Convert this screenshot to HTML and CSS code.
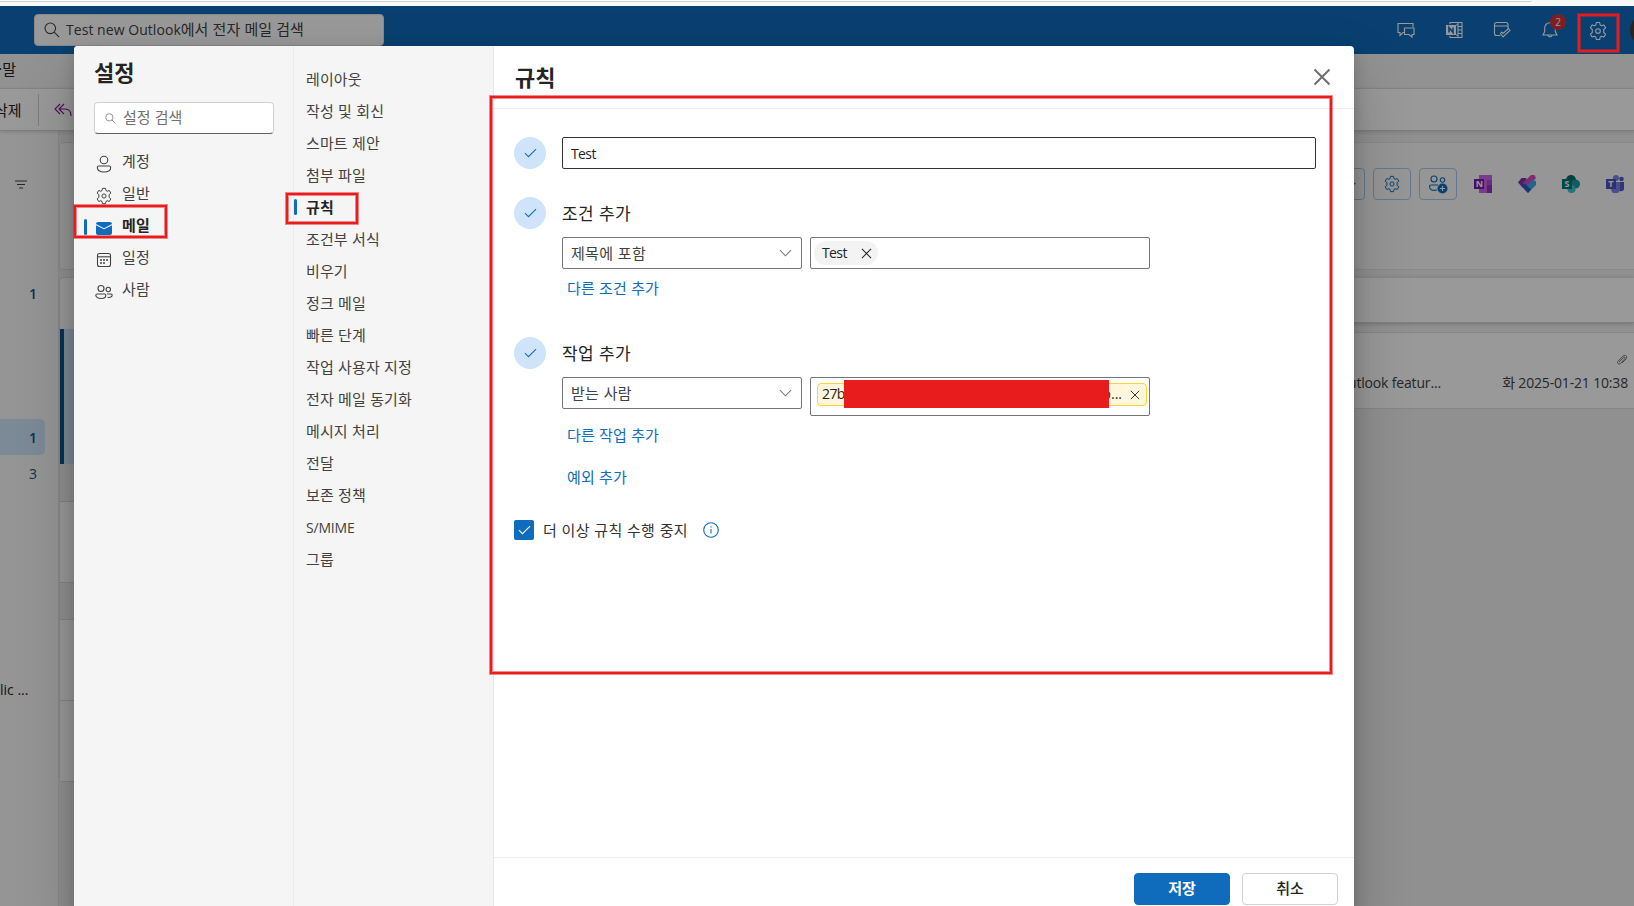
FILE: index.html
```html
<!DOCTYPE html>
<html lang="ko">
<head>
<meta charset="utf-8">
<title>설정 - 규칙</title>
<link rel="stylesheet" href="styles.css">
</head>
<body>
<svg class="defs" width="0" height="0">
  <symbol id="gear" viewBox="0 0 20 20"><path stroke-linejoin="round" d="M8.300 1.500h3.400l.5 2.500 1.300.75 2.400-.85 1.700 2.950-1.900 1.650v3l1.900 1.650-1.700 2.950-2.400-.85-1.300.75-.5 2.500H8.300l-.5-2.500-1.300-.75-2.400.85-1.700-2.950 1.900-1.650v-3L2.400 6.850 4.100 3.900l2.400.85L7.800 4z"/><circle cx="10" cy="10" r="2.300"/></symbol>
  <symbol id="check" viewBox="0 0 14 10"><path d="M1 5.200 4.800 9 13 .8"/></symbol>
  <symbol id="search" viewBox="0 0 16 16"><circle cx="6.300" cy="6.300" r="5.300"/><path d="m10.200 10.200 5 5"/></symbol>
  <symbol id="down" viewBox="0 0 14 8"><path d="m1 1 6 6 6-6"/></symbol>
  <symbol id="x" viewBox="0 0 12 12"><path d="m1 1 10 10M11 1 1 11"/></symbol>
</svg>

<div class="screen">
  <div class="chrome"><div class="address"></div></div>
  <div class="app">
    <header class="top">
      <div class="search"><svg class="ic" width="16" height="16"><use href="#search"/></svg><span><span class="en">Test new Outlook</span>에서 전자 메일 검색</span></div>
      <div class="topicons">
        <span><svg class="ic" width="20" height="20" viewBox="0 0 20 20"><path d="M8 12.500H7L4 15.500v-3H2V3.500h15V7"/><path d="M8.500 8h9.500v6.500h-2V17l-3-2.500H8.500z"/></svg></span>
        <span><svg class="ic" width="20" height="20" viewBox="0 0 20 20"><path d="M6 4V2.500h12v15H6V16M14 2.500v15M14 6.500h4M14 10h4M14 13.500h4M12 5h2M12 15h2"/><path class="fill" d="M2 5h10v10H2z"/><path class="cut" d="M5 12.500v-5l4 5v-5"/></svg></span>
        <span><svg class="ic" width="20" height="20" viewBox="0 0 20 20"><path d="M8.500 15.500H4.500a2 2 0 0 1-2-2v-9a2 2 0 0 1 2-2h9.500a2 2 0 0 1 2 2v4M2.500 6H16M8.500 13.500l2.500 3.500 7-6.500-1.500-2-5.500 5-1.300-1.500z"/></svg></span>
        <span class="bell"><svg class="ic" width="20" height="20" viewBox="0 0 20 20"><path d="M3 15h14l-1.700-3.500V8a5.300 5.300 0 0 0-10.600 0v3.500zM7.800 15.200a2.300 2.300 0 0 0 4.400 0"/></svg><b>2</b></span>
        <span><svg class="ic cog" width="20" height="20"><use href="#gear"/></svg></span>
      </div>
      <div class="avatar"></div>
    </header>
    <div class="tabs"><span>·말</span></div>
    <div class="toolbar"><span class="del">삭제</span><i></i><svg class="reply" width="18" height="14" viewBox="0 0 18 14"><path d="M6 1 1 6l5 5M10 1 5 6l5 5M5.500 6h5.500c4 0 6 3 6 7"/></svg></div>
    <div class="workspace">
      <nav class="folders">
        <svg class="filter" width="12" height="9" viewBox="0 0 12 9"><path d="M0 1h12M2 4.500h8M4 8h4"/></svg>
        <b class="n1">1</b><b class="pill">1</b><b class="n3">3</b><span class="pub">lic ...</span>
      </nav>
      <section class="list">
        <div class="card c1"></div>
        <div class="card c2"><div class="head"></div><div class="selected"></div><div class="gap wide"></div><div class="row"></div><div class="gap"></div><div class="row"></div><div class="row"></div></div>
      </section>
      <section class="reading">
        <div class="actions">
          <div class="btn part"><svg width="8" height="5" viewBox="0 0 14 8"><path stroke-width="2" d="m1 1 6 6 6-6"/></svg></div>
          <div class="btn"><svg class="blue" width="18" height="18"><use href="#gear"/></svg></div>
          <div class="btn"><svg class="blue" width="20" height="20" viewBox="0 0 20 20"><circle cx="6" cy="5" r="3"/><circle cx="14.500" cy="6" r="2.200"/><path d="M9 16c-4 1-7.500 0-7.500-3.500 0-1 .7-1.500 1.500-1.500h7M13 11h4"/><circle class="dot" cx="14.500" cy="14.500" r="4.500"/><path class="plus" d="M14.500 12v5M12 14.500h5"/></svg></div>
          <svg class="app1" width="18" height="18" viewBox="0 0 18 18"><path fill="#ca64ea" d="M5 0h13v18H5z"/><path fill="#ae4bd5" d="M13 5h5v5h-5z"/><path fill="#9332bf" d="M13 10h5v8h-5z"/><path fill="#7719aa" d="M0 4h10v10H0z"/><text x="1.800" y="12">N</text></svg>
          <svg class="app2" width="18" height="18" viewBox="0 0 18 18"><path fill="#7537ad" d="M0 7.500 3.500 3H8l2 4-5 6z"/><path fill="#d44ac1" d="M5 8 13 0h3.500L18 3l-8 9-5-1z"/><path fill="#3fa8e8" d="m14 5 4 1v4l-8 8-4.500-4.500z"/><path fill="#305abf" d="m3 10.500 4-2 6 6-3 3.500z"/></svg>
          <svg class="app3" width="18" height="18" viewBox="0 0 18 18"><circle cx="9" cy="5" r="5" fill="#036c70"/><circle cx="13.500" cy="9" r="4.500" fill="#1a9ba1"/><circle cx="9.500" cy="14" r="4" fill="#37c6d0"/><path fill="#03787c" d="M0 4h10v10H0z"/><text x="2.500" y="12">S</text></svg>
          <svg class="app4" width="18" height="18" viewBox="0 0 18 18"><circle cx="10" cy="3" r="3" fill="#7b83eb"/><circle cx="15.500" cy="4" r="2.300" fill="#5059c9"/><path fill="#5059c9" d="M12 7h6v5a3 3 0 0 1-6 2z"/><path fill="#7b83eb" d="M5 7h9v7a4.500 4.500 0 0 1-9 0z"/><path fill="#4b53bc" d="M0 4h10v10H0z"/><text x="2.300" y="12">T</text></svg>
        </div>
        <div class="subject"></div>
        <div class="message">
          <svg class="clip" width="12" height="12" viewBox="0 0 12 12"><path d="m3 8 4.500-4.500c1-1 2.300.2 1.300 1.300L4.500 9.500C2.800 11 .5 8.800 2 7.200L7 2c2.200-2 5 .7 3 3L6 9"/></svg>
          <p><span class="utl">utlook featur...</span><span class="date">화 2025-01-21 10:38</span></p>
        </div>
      </section>
    </div>
    <div class="scrim"></div>
  </div>

  <div class="dialog">
    <aside class="side">
      <h1>설정</h1>
      <div class="find"><svg width="11" height="11"><use href="#search"/></svg><span>설정 검색</span></div>
      <ul>
        <li><svg width="18" height="18" viewBox="0 0 18 18"><circle cx="9" cy="5" r="3.800"/><path d="M3.800 11h10.400c1 0 1.500.5 1.500 1.500 0 2.500-2.500 4.500-6.700 4.500s-6.700-2-6.700-4.500c0-1 .5-1.500 1.500-1.500z"/></svg>계정</li>
        <li><svg width="18" height="18"><use href="#gear"/></svg>일반</li>
        <li class="on"><i></i><svg width="18" height="18" viewBox="0 0 18 18"><path class="mail" d="M1 6.200 9 10.300 17 6.200V14a2 2 0 0 1-2 2H3a2 2 0 0 1-2-2zM1 5a2 2 0 0 1 2-2h12a2 2 0 0 1 2 2L9 9.200z"/></svg>메일</li>
        <li><svg width="18" height="18" viewBox="0 0 18 18"><rect x="2.500" y="2.500" width="13" height="13" rx="2"/><path d="M2.500 5.800h13"/><path class="dots" d="M5 9h2M8 9h2M11 9h2M5 12h2M8 12h2"/></svg>일정</li>
        <li><svg width="18" height="18" viewBox="0 0 18 18"><circle cx="6" cy="5.500" r="3"/><circle cx="13.300" cy="6.500" r="2.200"/><path d="M2.300 11h7.400c.7 0 1.100.5 1.100 1.200 0 2-2 3.300-4.800 3.300s-5.200-1.300-5.200-3.300c0-.7.700-1.200 1.500-1.200zM12 11h4c.8 0 1.200.4 1.200 1.100 0 1.800-2 2.700-4.700 2.200"/></svg>사람</li>
      </ul>
    </aside>
    <aside class="sub">
      <ul>
        <li>레이아웃</li><li>작성 및 회신</li><li>스마트 제안</li><li>첨부 파일</li><li class="on"><i></i>규칙</li><li>조건부 서식</li><li>비우기</li><li>정크 메일</li><li>빠른 단계</li><li>작업 사용자 지정</li><li>전자 메일 동기화</li><li>메시지 처리</li><li>전달</li><li>보존 정책</li><li class="en">S/MIME</li><li>그룹</li>
      </ul>
    </aside>
    <main class="pane">
      <div class="title"><h2>규칙</h2><svg width="18" height="18"><use href="#x"/></svg></div>
      <div class="form">
        <div class="step first"><span class="ok"><svg width="13" height="10"><use href="#check"/></svg></span><div class="name en">Test</div></div>
        <div class="step cond"><span class="ok"><svg width="13" height="10"><use href="#check"/></svg></span>
          <div class="body"><h3>조건 추가</h3>
            <div class="fields"><div class="select">제목에 포함<svg width="13" height="8"><use href="#down"/></svg></div><div class="box"><span class="tag en">Test<svg width="11" height="11"><use href="#x"/></svg></span></div></div>
            <a class="more">다른 조건 추가</a></div></div>
        <div class="step act"><span class="ok"><svg width="13" height="10"><use href="#check"/></svg></span>
          <div class="body"><h3>작업 추가</h3>
            <div class="fields"><div class="select">받는 사람<svg width="13" height="8"><use href="#down"/></svg></div><div class="box tall"><span class="person en"><span class="pre">27b</span><span class="mask"></span><span class="post">o...</span><svg width="10" height="10"><use href="#x"/></svg></span></div></div>
            <a class="more">다른 작업 추가</a><a class="more except">예외 추가</a></div></div>
        <div class="stop"><span class="cb"><svg width="13" height="10"><use href="#check"/></svg></span><span class="lbl">더 이상 규칙 수행 중지</span><svg class="info" width="16" height="16" viewBox="0 0 16 16"><circle cx="8" cy="8" r="7.300"/><path d="M8 7v4.500M8 4.300v1.200"/></svg></div>
      </div>
      <footer><button class="save">저장</button><button>취소</button></footer>
    </main>
  </div>

  <div class="mark m1"></div><div class="mark m2"></div><div class="mark m3"></div><div class="mark m4"></div>
</div>
</body>
</html>
```
FILE: styles.css
```css
* { box-sizing: border-box; }
body, h1, h2, h3, ul, p { margin: 0; padding: 0; }
ul { list-style: none; }
body { overflow: hidden; font: 15px/20px "Noto Sans CJK KR", "Noto Sans", sans-serif; color: #242424; }
.en { font-family: "Open Sans", "Noto Sans", sans-serif; font-size: 14px; letter-spacing: -.6px; }
.defs { position: absolute; }
svg { fill: none; stroke: currentColor; stroke-width: 1.1; flex: none; }
.screen { position: relative; width: 1634px; height: 906px; overflow: hidden; display: flex; flex-direction: column; }
.chrome { height: 6px; background: #f8faf9; flex: none; }
.address { width: 1532px; height: 2px; border-bottom: 1px solid #c9cdcb; border-radius: 0 0 14px 0; background: #fff; }
.app { position: relative; flex: 1; display: flex; flex-direction: column; background: #f0f0f0; }
.scrim { position: absolute; inset: 0; background: rgba(0,0,0,.4); }

.top { height: 48px; background: #0f6cbd; display: flex; align-items: center; padding-left: 34px; color: #fff; overflow: hidden; flex: none; }
.search { width: 350px; flex: none; height: 32px; border-radius: 4px; border: 1px solid #e4e4e4; background: #fff; color: #424242; display: flex; align-items: center; gap: 6px; padding: 0 0 1px 9px; white-space: nowrap; }
.search .en { letter-spacing: .05px; }
.topicons { margin-left: 998px; display: flex; flex: none; }
.topicons > span { width: 48px; height: 48px; display: flex; align-items: center; justify-content: center; position: relative; }
.ic .fill { fill: #fff; stroke: none; }
.ic .cut { stroke: #0f6cbd; stroke-width: 1.6; }
.cog { margin-top: 2px; }
.bell b { position: absolute; left: 24px; top: 8px; width: 16px; height: 16px; border-radius: 50%; background: #d13438; font: 10px/16px "Open Sans", sans-serif; text-align: center; }
.avatar { width: 32px; height: 32px; border-radius: 50%; background: #4c3a32; margin-left: 8px; flex: none; }
.tabs { height: 35px; background: #f3f3f3; border-bottom: 1px solid #e5e5e5; flex: none; padding: 5px 0 0 0; }
.tabs span { margin-left: -2px; }
.toolbar { height: 42px; background: #fff; border-bottom: 1px solid #d0d0d0; box-shadow: 0 1px 4px rgba(0,0,0,.15); display: flex; align-items: center; flex: none; z-index: 0; position: relative; }
.del { margin-left: -6px; }
.toolbar i { width: 1px; height: 32px; background: #d1d1d1; margin: 0 15px 0 16px; }
.reply { color: #881798; }

.workspace { display: flex; flex: 1; min-height: 0; }
.folders { width: 58px; flex: none; background: #f9f9f9; display: flex; flex-direction: column; align-items: flex-start; color: #0f548c; font: 14px/20px "Open Sans", sans-serif; }
.filter { margin: 49px 0 0 15px; color: #424242; }
.folders b { font-weight: 600; padding-left: 29px; }
.folders .n1 { margin-top: 95px; }
.folders .pill { margin-top: 115px; width: 45px; height: 36px; line-height: 37px; background: #cfe4fa; border-radius: 0 5px 5px 0; }
.folders .n3 { margin-top: 9px; font-weight: 400; }
.pub { margin-top: 196px; color: #242424; letter-spacing: 0; white-space: pre; }
.list { width: 1201px; flex: none; padding-top: 11px; border-left: 1px solid #e3e3e3; }
.card { border: 1px solid #e0e0e0; border-right: 0; background: #fafafa; border-radius: 5px 0 0 5px; }
.c1 { height: 128px; }
.c2 { margin-top: 7px; border-bottom: 0; background: #fff; }
.head { height: 51px; }
.selected { height: 135px; background: #cfe4fa; border-left: 4px solid #0f548c; }
.gap { height: 37px; background: #f0f0f0; border-bottom: 1px solid #ddd; }
.wide { height: 38px; }
.row { height: 81px; background: #fff; border-bottom: 1px solid #ddd; }
.reading { flex: 1; min-width: 0; padding-top: 11px; display: flex; flex-direction: column; }
.actions { height: 128px; background: #fafafa; border: solid #e4e4e4; border-width: 1px 0; display: flex; align-items: flex-start; padding: 25px 0 0 68px; }
.btn { width: 38px; height: 32px; border: 1px solid #a9c8ea; border-radius: 4px; display: flex; align-items: center; justify-content: center; margin-right: 8px; flex: none; }
.part { justify-content: flex-end; padding-right: 8px; color: #0f6cbd; }
.blue { color: #0f6cbd; }
.blue .dot { fill: #0f6cbd; } .blue .plus { stroke: #fff; }
.actions > svg { margin: 7px 26px 0 0; stroke: none; }
.actions > .app1 { margin-left: 9px; }
.actions .app4 { margin-right: 0; }
.actions text { font: bold 9px "Open Sans", sans-serif; fill: #fff; }
.subject { margin-top: 7px; height: 46px; background: #fff; border: solid #e4e4e4; border-width: 1px 0; border-bottom-color: #d4d4d4; box-shadow: 0 1px 4px rgba(0,0,0,.2); flex: none; }
.message { margin-top: 9px; height: 77px; background: #fff; border: solid #e0e0e0; border-width: 1px 0; padding: 21px 6px 0 89px; color: #424242; display: flex; flex-direction: column; }
.clip { align-self: flex-end; stroke-width: .7; }
.message p { margin-top: 7px; display: flex; justify-content: space-between; font: 14px/20px "Open Sans", "Noto Sans CJK KR", sans-serif; letter-spacing: -.17px; white-space: nowrap; }

.dialog { position: absolute; left: 74px; top: 46px; width: 1280px; height: 880px; border-radius: 4px; background: #fff; display: flex; box-shadow: 0 26px 58px rgba(0,0,0,.22), 0 5px 15px rgba(0,0,0,.18); }
.side { width: 219px; background: #f5f5f5; border-radius: 4px 0 0 0; padding: 10px 0 0 20px; color: #424242; }
h1, h2 { font-size: 22px; line-height: 30px; font-weight: 700; color: #242424; }
.find { margin-top: 16px; width: 180px; height: 32px; border: 1px solid #d1d1d1; border-bottom-color: #616161; border-radius: 4px; background: #fff; display: flex; align-items: center; gap: 7px; padding: 0 0 2px 10px; color: #707070; }
.find svg { margin-top: 2px; }
.side ul { margin-top: 11px; }
.side li { height: 32px; display: flex; align-items: center; gap: 9px; padding-left: 1px; letter-spacing: .1px; position: relative; }
.side li svg { margin-top: 5px; }
.side li .mail { fill: #0f6cbd; stroke: none; }
.dots { stroke-width: 1.6; }
.side .on, .sub .on { font-weight: 700; color: #242424; }
li i { position: absolute; left: -10px; top: 10px; width: 3px; height: 16px; border-radius: 2px; background: #0f6cbd; }
.sub { width: 201px; background: #f5f5f5; border-left: 1px solid #ececec; border-right: 1px solid #e6e6e6; padding: 17px 0 0 12px; color: #424242; }
.sub li { height: 32px; line-height: 32px; letter-spacing: .1px; position: relative; }
.sub li i { left: -12px; top: 8px; }
.sub .en { letter-spacing: -.2px; padding-top: 1px; }
.pane { flex: 1; display: flex; flex-direction: column; }
.title { height: 63px; border-bottom: 1px solid #ececec; display: flex; justify-content: space-between; align-items: center; padding: 0 23px 2px 21px; }
.title svg { color: #707070; stroke-width: 1.4; margin-top: 2px; }
.form { height: 749px; padding: 28px 38px 0 20px; border-bottom: 1px solid #ececec; }
.step { display: flex; gap: 16px; }
.ok { width: 32px; height: 32px; border-radius: 50%; background: #cfe4fa; color: #0f6cbd; display: flex; align-items: center; justify-content: center; flex: none; }
.first { height: 60px; }
.cond { height: 140px; }
.act { height: 183px; }
.name { flex: 1; height: 32px; border: 1px solid #333; border-radius: 2px; padding-left: 8px; line-height: 32px; }
h3 { font-size: 17px; font-weight: 400; line-height: 31px; height: 40px; letter-spacing: .3px; }
.fields { display: flex; gap: 8px; height: 32px; }
.select, .box { border: 1px solid #767676; border-radius: 2px; height: 32px; }
.select { width: 240px; display: flex; align-items: center; justify-content: space-between; padding: 0 9px 0 8px; color: #424242; letter-spacing: .3px; }
.select svg { color: #777; }
.box { width: 340px; padding: 3px; }
.tall { height: 39px; padding: 5px 2px 0 6px; }
.tag { width: 64px; height: 24px; border-radius: 12px; background: #f3f3f3; display: flex; align-items: center; justify-content: space-between; padding: 0 6px 0 8px; }
.person { height: 23px; border: 1px solid #ffd335; border-radius: 4px; background: #fff6dc; display: flex; align-items: center; padding: 0 6px 1px 4px; position: relative; }
.person svg { margin-top: 2px; }
.pre { width: 60px; }
.post { margin-left: auto; margin-right: 8px; letter-spacing: 0; }
.mask { position: absolute; left: 26px; top: -4px; width: 265px; height: 28px; background: #e81c1c; }
.more { display: block; margin: 9px 0 0 5px; line-height: 20px; color: #0f6cbd; letter-spacing: .1px; }
.act .more { margin-top: 16px; }
.act .except { margin-top: 22px; }
.stop { display: flex; align-items: center; height: 20px; }
.cb { width: 20px; height: 20px; border-radius: 2px; background: #0f6cbd; color: #fff; display: flex; align-items: center; justify-content: center; margin-right: 9px; }
.lbl { letter-spacing: .3px; color: #333; }
.info { margin-left: 15px; color: #0f6cbd; }
footer { display: flex; justify-content: flex-end; gap: 12px; padding: 15px 16px 0 0; }
button { width: 96px; height: 32px; border: 1px solid #d1d1d1; border-radius: 4px; background: #fff; color: #242424; font: 500 15px/20px "Noto Sans CJK KR", sans-serif; padding: 0 0 2px; }
.save { background: #0f6cbd; border-color: #0f6cbd; color: #fff; font-weight: 700; }

.mark { position: absolute; border: 2px solid #e81c1c; box-shadow: 0 0 0 1px rgba(232,28,28,.5), inset 0 0 0 1px rgba(232,28,28,.5); }
.m1 { left: 1578px; top: 14px; width: 41px; height: 38px; }
.m2 { left: 74px; top: 205px; width: 93px; height: 33px; }
.m3 { left: 286px; top: 193px; width: 72px; height: 31px; }
.m4 { left: 490px; top: 96px; width: 842px; height: 578px; }
```
